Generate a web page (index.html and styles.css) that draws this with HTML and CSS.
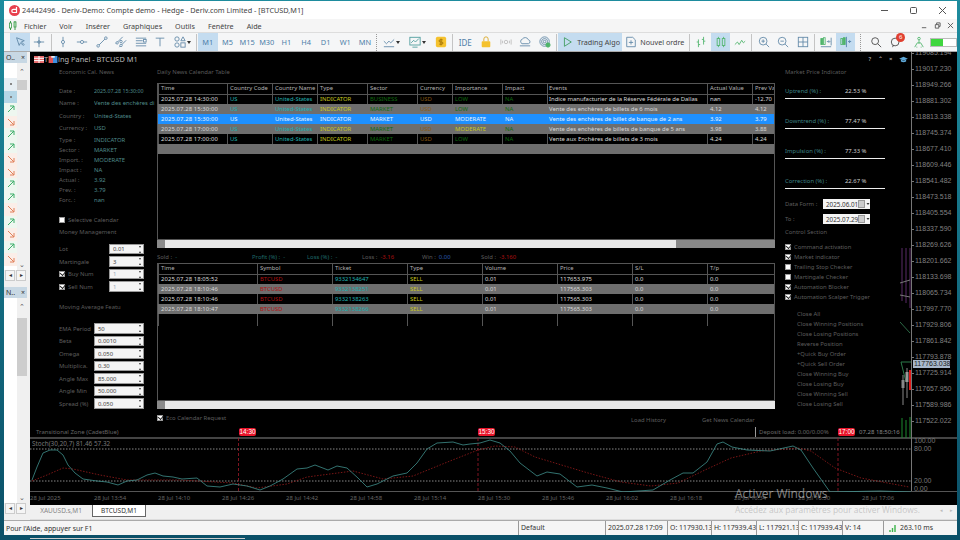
FILE: index.html
```
<!DOCTYPE html>
<html lang="fr">
<head>
  <meta charset="UTF-8" />
  <title>24442496 - Deriv-Demo</title>
  <link rel="stylesheet" href="styles.css">
</head>
<body>
  <svg class="sprites">
    <symbol id="arrow-up" viewBox="0 0 8 8"><path d="M1 7 7 1M3 1h4v4" fill="none" stroke="#3fae6a"/></symbol>
    <symbol id="arrow-down" viewBox="0 0 8 8"><path d="M1 1l6 6M3 7h4V3" fill="none" stroke="#e0805a"/></symbol>
  </svg>

  <div class="window">
    <div class="titlebar">
      <svg class="logo" viewBox="0 0 11 11"><circle cx="5.5" cy="5.5" r="5.5" fill="#e8404e"/><path d="M7.5 2v5.5H4.4a1.6 1.6 0 0 1 0-3.2h3" fill="none" stroke="#fff" stroke-width="1.2"/></svg>
      <span class="title-text">24442496 - Deriv-Demo: Compte demo - Hedge - Deriv.com Limited - [BTCUSD,M1]</span>
      <div class="win-buttons">
        <svg viewBox="0 0 9 9"><path d="M1 4.5h7" stroke="#555"/></svg>
        <svg viewBox="0 0 9 9"><rect x="1.5" y="1.5" width="6" height="6" rx="1" fill="none" stroke="#555"/></svg>
        <svg viewBox="0 0 9 9"><path d="M1 1l7 7M8 1 1 8" stroke="#555"/></svg>
      </div>
    </div>

    <div class="menubar">
      <svg class="menu-icon" viewBox="0 0 9 9"><path d="M1.5 0v9M6 0v9" stroke="#3c9a4a"/><rect x=".5" y="2" width="2" height="5" fill="#fff" stroke="#3c9a4a" stroke-width=".8"/><rect x="5" y="1" width="2" height="5" fill="#bfe8c4" stroke="#3c9a4a" stroke-width=".8"/></svg>
      <nav class="menu">
        <span>Fichier</span><span>Voir</span><span>Insérer</span><span>Graphiques</span><span>Outils</span><span>Fenêtre</span><span>Aide</span>
      </nav>
      <div class="mdi-buttons">
        <svg viewBox="0 0 8 8"><path d="M1 6.5h5" stroke="#555"/></svg>
        <svg viewBox="0 0 8 8"><path d="M1.5 3h4v4h-4zM3 3V1h4v4H5.5" fill="none" stroke="#555"/></svg>
        <svg viewBox="0 0 8 8"><path d="M1 1l6 6M7 1 1 7" stroke="#555"/></svg>
      </div>
    </div>

    <div class="toolbar">
      <button class="tool active"><svg class="ico" viewBox="0 0 14 14"><path d="M3 2l3 9 1.5-3L11 11l1-1-3.5-3L12 5.500z"/></svg></button>
      <button class="tool"><svg class="ico" viewBox="0 0 14 14"><path d="M7 1v12M1 7h12"/><circle cx="7" cy="7" r="1.500"/></svg></button>
      <i class="sep"></i>
      <button class="tool"><svg class="ico" viewBox="0 0 14 14"><path d="M7 1v12"/><circle cx="7" cy="7" r="1.800" fill="#fff"/></svg></button>
      <button class="tool"><svg class="ico" viewBox="0 0 14 14"><path d="M1 7h12"/><circle cx="7" cy="7" r="1.800" fill="#fff"/></svg></button>
      <button class="tool"><svg class="ico" viewBox="0 0 14 14"><path d="M3 11 11 3"/><circle cx="2.500" cy="11.500" r="1.500" fill="#fff"/><circle cx="11.500" cy="2.500" r="1.500" fill="#fff"/></svg></button>
      <button class="tool"><svg class="ico" viewBox="0 0 14 14"><path d="M1 9 9 1M5 13l8-8"/><circle cx="2.500" cy="8" r="1.400" fill="#fff"/><circle cx="7" cy="6.500" r="1.400" fill="#fff"/><circle cx="7" cy="11" r="1.400" fill="#fff"/></svg></button>
      <button class="tool"><svg class="ico" viewBox="0 0 14 14"><path d="M1 2.500h12M1 5.500h8M1 8.500h12M1 11.500h12"/><rect x="10" y="4" width="3" height="3" fill="#fff"/></svg></button>
      <button class="tool"><svg class="ico" viewBox="0 0 14 14"><path d="M2 2.500h10M7 2.500V12"/></svg></button>
      <button class="tool wide"><svg class="ico" viewBox="0 0 14 14"><circle cx="3.500" cy="3.500" r="2.500"/><path d="M10.500 1 13 5.500H8z"/><circle cx="3.500" cy="10.500" r="2.500"/><rect x="8" y="8" width="5" height="5"/></svg><b class="caret"></b></button>
      <i class="sep"></i>
      <div class="timeframes">
        <span class="active">M1</span><span>M5</span><span>M15</span><span>M30</span><span>H1</span><span>H4</span><span>D1</span><span>W1</span><span>MN</span>
      </div>
      <i class="sep dotted"></i>
      <button class="tool wider"><svg class="ico" viewBox="0 0 14 14"><path d="M1 6l3 3 3-3 2 2 4-4M1 12.500h12"/></svg><b class="caret"></b></button>
      <button class="tool wider"><svg class="ico teal" viewBox="0 0 14 14"><rect x="1" y="1.500" width="12" height="9"/><path d="M2.500 8l3-3 2 2 4-4M4 13h6"/></svg><b class="caret"></b></button>
      <button class="tool"><svg viewBox="0 0 14 14"><rect x="1" y="1" width="12" height="12" rx="2" fill="#f5c22e"/><path d="M9 4.500H6a1.200 1.200 0 0 0 0 2.500h2a1.200 1.200 0 0 1 0 2.500H5M7 3v8" fill="none" stroke="#9a6d00"/></svg></button>
      <i class="sep"></i>
      <button class="tool text">IDE</button>
      <button class="tool"><svg viewBox="0 0 14 14"><rect x="2" y="6" width="10" height="7" rx="1" fill="#f5c22e"/><path d="M4.500 6V3.500a2.500 2.500 0 0 1 5 0V6" fill="none" stroke="#d9a520"/></svg></button>
      <button class="tool"><svg class="ico faint" viewBox="0 0 14 14"><path d="M1 4v6M13 4v6M3 5.500v3M11 5.500v3"/><circle cx="7" cy="7" r="2"/></svg></button>
      <button class="tool"><svg class="ico" viewBox="0 0 14 14"><path d="M3.500 9a3 3 0 0 1 .5-5.500 4 4 0 0 1 7 1A2.300 2.300 0 0 1 11 9zM1 11.500h12"/></svg></button>
      <button class="tool"><svg class="ico" viewBox="0 0 14 14"><circle cx="6.500" cy="6.500" r="5.500"/><circle cx="6.500" cy="6.500" r="3.500"/><circle cx="6.500" cy="6.500" r="1.500"/><circle cx="10.500" cy="10.500" r="2.500" fill="#4eb46a" stroke="#4eb46a"/></svg></button>
      <i class="sep"></i>
      <button class="tool label algo active"><svg class="ico" viewBox="0 0 14 14"><path d="M4 2l8 5-8 5z" stroke="#3d9a5c"/></svg>Trading Algo</button>
      <button class="tool label order"><svg class="ico" viewBox="0 0 14 14"><path d="M2 1.500h7l3 3v8H2zM7 5v5M4.500 7.500h5"/></svg>Nouvel ordre</button>
      <i class="sep"></i>
      <button class="tool"><svg class="ico green" viewBox="0 0 14 14"><path d="M4 4v9M2 7h2M4 10h2M10 1v9M8 4h2M10 6h2"/></svg></button>
      <button class="tool active"><svg class="ico green" viewBox="0 0 14 14"><rect x="2.500" y="3" width="3" height="8"/><rect x="8.500" y="3" width="3" height="8"/><path d="M4 1v2M4 11v2M10 1v2M10 11v2"/></svg></button>
      <button class="tool"><svg class="ico green" viewBox="0 0 14 14"><path d="M1 10l3-3 2 3 3-5 2 3 2-2"/></svg></button>
      <i class="sep"></i>
      <button class="tool"><svg class="ico" viewBox="0 0 14 14"><circle cx="6" cy="6" r="4.500"/><path d="M9.500 9.500 13 13M4 6h4M6 4v4"/></svg></button>
      <button class="tool"><svg class="ico" viewBox="0 0 14 14"><circle cx="6" cy="6" r="4.500"/><path d="M9.500 9.500 13 13M4 6h4"/></svg></button>
      <button class="tool"><svg class="ico" viewBox="0 0 14 14"><rect x="1.500" y="1.500" width="11" height="11"/><path d="M7 1.500v11M1.500 7h11"/></svg></button>
      <i class="sep"></i>
      <button class="tool"><svg class="ico green" viewBox="0 0 14 14"><rect x="1" y="3" width="2" height="7" fill="#4eb46a"/><rect x="4" y="2" width="2" height="8"/><path d="M8 6.500h3M10 5l1.500 1.500L10 8M13 2v9M1 12.500h12" stroke="#5f86a6"/></svg></button>
      <button class="tool active"><svg class="ico green" viewBox="0 0 14 14"><rect x="1" y="3" width="2" height="7"/><rect x="4" y="2" width="2" height="8" fill="#4eb46a"/><path d="M7.500 1v12M13 6.500h-3M11.500 5 10 6.500 11.500 8" stroke="#4d7ea8"/></svg></button>
      <i class="sep dotted spaced"></i>
      <button class="tool"><svg class="ico dark" viewBox="0 0 14 14"><circle cx="6" cy="6" r="4"/><path d="M9 9l4 4"/></svg></button>
      <button class="tool chat"><svg class="ico dark" viewBox="0 0 14 14"><circle cx="6" cy="7" r="4.500"/><path d="M4 10.500 3 13"/></svg><em class="badge">6</em></button>
      <button class="tool signal"><svg class="ico green" viewBox="0 0 14 14"><circle cx="7" cy="3" r="1.500"/><path d="M7 4.500V9M2 13l3-5h4l3 5M4 13h1M9 13h1"/></svg></button>
      <div class="meter"><span></span></div>
    </div>

    <div class="workspace">
      <aside class="sidebar">
        <section class="dock dock-top">
          <header class="dock-head"><span>O..</span><span>×</span></header>
          <div class="dock-body">
            <ul class="quotes">
              <li class="dot"><b></b></li>
              <li class="dot picked"><b></b></li>
              <li><svg><use href="#arrow-up"/></svg></li>
              <li class="down"><svg><use href="#arrow-down"/></svg></li>
              <li><svg><use href="#arrow-up"/></svg></li>
              <li><svg><use href="#arrow-up"/></svg></li>
              <li class="down"><svg><use href="#arrow-down"/></svg></li>
              <li class="down"><svg><use href="#arrow-down"/></svg></li>
              <li><svg><use href="#arrow-up"/></svg></li>
              <li><svg><use href="#arrow-up"/></svg></li>
              <li class="down"><svg><use href="#arrow-down"/></svg></li>
              <li><svg><use href="#arrow-up"/></svg></li>
              <li class="down"><svg><use href="#arrow-down"/></svg></li>
              <li><svg><use href="#arrow-up"/></svg></li>
              <li class="down"><svg><use href="#arrow-down"/></svg></li>
            </ul>
            <div class="vscroll vscroll-top"><span class="chev">⌃</span><span class="thumb"></span><span class="chev bottom">⌄</span></div>
          </div>
          <div class="hscroll"><span>◂</span><span>▸</span></div>
        </section>
        <section class="dock dock-bottom">
          <header class="dock-head"><span>N..</span><span>×</span></header>
          <div class="dock-body">
            <div class="blank-list"></div>
            <div class="vscroll vscroll-bottom"><span class="chev">⌃</span><span class="thumb"></span><span class="chev bottom">⌄</span></div>
          </div>
          <div class="hscroll"><span>◂</span><span>▸</span></div>
        </section>
      </aside>

      <div class="charts">
        <div class="main-pane">
          <div class="plot">
            <svg class="candles" viewBox="0 0 12 190">
              <path d="M2 0v53M6 0v55M10 0v60" stroke="#5a2a68"/>
              <path d="M0 35l10-3M0 47l10 2" stroke="#777"/>
              <path d="M0 74l10 11" stroke="#2c6a46"/>
              <path d="M1 114h11M1 114l5 20" stroke="#2c7a4a"/>
              <path d="M3 127v30M7 120v30" stroke="#888"/>
              <rect x="1.500" y="132" width="3" height="8" fill="#888"/>
              <rect x="5.500" y="124" width="3" height="10" fill="#999"/>
              <rect x="9" y="122" width="2.500" height="20" fill="#e01818"/>
              <path d="M2 170v20M6 172v18M10 169v21" stroke="#1c8a2e"/>
            </svg>
            <div class="panel">
              <header class="panel-title">
                <svg class="panel-icon" viewBox="0 0 10 7"><rect width="10" height="7" fill="#e86a6a"/><path d="M0 2.300h10M0 4.600h10M5 0v7" stroke="#fff"/></svg>
                <span>T</span>
                <svg class="panel-icon" viewBox="0 0 10 8"><rect width="5" height="8" y="0" fill="#e25555"/><rect x="5" width="5" height="8" fill="#3d8fe0"/><rect x="3" y="0" width="4" height="2" fill="#eee"/></svg>
                <span>ing Panel - BTCUSD M1</span>
                <div class="panel-actions">
                  <span>?</span><span>⌃</span><span>×</span>
                  <svg viewBox="0 0 10 8"><path d="M0 3 5 .8 10 3 5 5.200z" fill="#5ea8d8"/><path d="M2 4v2.200c2 1.200 4 1.200 6 0V4L5 5.300z" fill="#5ea8d8"/></svg>
                </div>
              </header>

              <div class="panel-body">
                <div class="col-news">
                  <h4 class="section">Economic Cal. News</h4>
                  <div class="info info-tall first"><label>Date :</label><span class="date-value">2025.07.28 15:30:00</span></div>
                  <div class="info info-tall"><label>Name :</label><span>Vente des enchères di</span></div>
                  <div class="info info-tall"><label>Country :</label><span>United-States</span></div>
                  <div class="info info-tall"><label>Currency :</label><span>USD</span></div>
                  <div class="info"><label>Type :</label><span>INDICATOR</span></div>
                  <div class="info"><label>Sector :</label><span>MARKET</span></div>
                  <div class="info"><label>Import. :</label><span>MODERATE</span></div>
                  <div class="info"><label>Impact :</label><span>NA</span></div>
                  <div class="info"><label>Actual :</label><span>3.92</span></div>
                  <div class="info"><label>Prev. :</label><span>3.79</span></div>
                  <div class="info"><label>Forc. :</label><span>nan</span></div>
                  <div class="check-row selective"><i class="check"></i>Selective Calendar</div>
                  <h4 class="section money">Money Management</h4>
                  <div class="field first-money"><label>Lot</label><div class="spin short"><span>0.01</span><b></b></div></div>
                  <div class="field"><label>Martingale</label><div class="spin short"><span>3</span><b></b></div></div>
                  <div class="field"><label><i class="check on"></i>Buy Num</label><div class="spin short off"><span>1</span><b></b></div></div>
                  <div class="field"><label><i class="check on"></i>Sell Num</label><div class="spin short off"><span>1</span><b></b></div></div>
                  <h4 class="section moving">Moving Average Featu</h4>
                  <div class="field first-ema"><label>EMA Period</label><div class="spin"><span>50</span><b></b></div></div>
                  <div class="field"><label>Beta</label><div class="spin"><span>0.0010</span><b></b></div></div>
                  <div class="field"><label>Omega</label><div class="spin"><span>0.050</span><b></b></div></div>
                  <div class="field"><label>Multiplica.</label><div class="spin"><span>0.30</span><b></b></div></div>
                  <div class="field"><label>Angle Max</label><div class="spin"><span>85.000</span><b></b></div></div>
                  <div class="field"><label>Angle Min</label><div class="spin"><span>50.000</span><b></b></div></div>
                  <div class="field"><label>Spread (%)</label><div class="spin"><span>0.050</span><b></b></div></div>
                </div>

                <div class="col-tables">
                  <h4 class="section">Daily News Calendar Table</h4>
                  <div class="grid-box news-box">
                    <table class="grid news-grid">
                      <colgroup><col><col><col><col><col><col><col><col><col><col><col></colgroup>
                      <tr><th>Time</th><th>Country Code</th><th>Country Name</th><th>Type</th><th>Sector</th><th>Currency</th><th>Importance</th><th>Impact</th><th class="ev">Events</th><th>Actual Value</th><th>Prev Value</th></tr>
                      <tr><td>2025.07.28 14:30:00</td><td class="teal">US</td><td class="teal">United-States</td><td class="yellow">INDICATOR</td><td class="green">BUSINESS</td><td class="orange">USD</td><td class="green">LOW</td><td class="green">NA</td><td class="ev">Indice manufacturier de la Réserve Fédérale de Dallas</td><td>nan</td><td>-12.70</td></tr>
                      <tr class="alt"><td>2025.07.28 15:30:00</td><td class="teal">US</td><td class="teal">United-States</td><td class="yellow">INDICATOR</td><td class="green">MARKET</td><td class="orange">USD</td><td class="green">LOW</td><td class="green">NA</td><td class="ev">Vente des enchères de billets de 6 mois</td><td>4.12</td><td>4.12</td></tr>
                      <tr class="selected"><td>2025.07.28 15:30:00</td><td>US</td><td>United-States</td><td>INDICATOR</td><td>MARKET</td><td>USD</td><td>MODERATE</td><td>NA</td><td class="ev">Vente des enchères de billet de banque de 2 ans</td><td>3.92</td><td>3.79</td></tr>
                      <tr class="alt"><td>2025.07.28 17:00:00</td><td class="teal">US</td><td class="teal">United-States</td><td class="yellow">INDICATOR</td><td class="green">MARKET</td><td class="orange">USD</td><td class="yellow">MODERATE</td><td class="green">NA</td><td class="ev">Vente des enchères de billets de banque de 5 ans</td><td>3.98</td><td>3.88</td></tr>
                      <tr><td>2025.07.28 17:00:00</td><td class="teal">US</td><td class="teal">United-States</td><td class="yellow">INDICATOR</td><td class="green">MARKET</td><td class="orange">USD</td><td class="green">LOW</td><td class="green">NA</td><td class="ev">Vente aux Enchères de billets de 3 mois</td><td>4.24</td><td>4.24</td></tr>
                      <tr class="alt"><td colspan="11"></td></tr>
                    </table>
                  </div>
                  <div class="hbar"><i></i><span></span></div>

                  <div class="summary">
                    <span class="sum-sold">Sold :&nbsp; <em class="teal">-</em></span>
                    <span class="sum-pct dim-teal">Profit (%) :&nbsp; -</span>
                    <span class="sum-pct dim-teal">Loss (%) :&nbsp; -</span>
                    <span class="sum-loss">Loss :&nbsp; <em class="red">-3.16</em></span>
                    <span class="sum-win">Win :&nbsp; <em class="blue">0.00</em></span>
                    <span>Sold :&nbsp; <em class="red">-3.160</em></span>
                  </div>

                  <div class="grid-box trades-box">
                    <table class="grid trades-grid">
                      <colgroup><col><col><col><col><col><col><col><col></colgroup>
                      <tr><th>Time</th><th>Symbol</th><th>Ticket</th><th>Type</th><th>Volume</th><th>Price</th><th>S/L</th><th>T/p</th></tr>
                      <tr><td>2025.07.28 18:05:52</td><td class="red">BTCUSD</td><td class="teal">9332134647</td><td class="yellow">SELL</td><td>0.01</td><td>117653.975</td><td>0.0</td><td>0.0</td></tr>
                      <tr class="alt"><td>2025.07.28 18:10:46</td><td class="red">BTCUSD</td><td class="teal">9332138251</td><td class="yellow">SELL</td><td>0.01</td><td>117565.303</td><td>0.0</td><td>0.0</td></tr>
                      <tr><td>2025.07.28 18:10:46</td><td class="red">BTCUSD</td><td class="teal">9332138263</td><td class="yellow">SELL</td><td>0.01</td><td>117565.303</td><td>0.0</td><td>0.0</td></tr>
                      <tr class="alt"><td>2025.07.28 18:10:47</td><td class="red">BTCUSD</td><td class="teal">9332138266</td><td class="yellow">SELL</td><td>0.01</td><td>117565.303</td><td>0.0</td><td>0.0</td></tr>
                      <tr class="empty"><td></td><td></td><td></td><td></td><td></td><td></td><td></td><td></td></tr>
                    </table>
                  </div>
                  <div class="hbar short-bar"><i></i><span></span></div>

                  <div class="panel-footer">
                    <div class="check-row eco"><i class="check on"></i>Eco Calendar Request</div>
                    <span class="load-link">Load History</span>
                    <span class="news-link">Get News Calendar</span>
                  </div>
                </div>

                <div class="col-control">
                  <h4 class="section">Market Price Indicator</h4>
                  <div class="gauge first"><label>Uptrend (%) :</label><span>22.53 %</span></div>
                  <div class="gauge"><label>Downtrend (%) :</label><span>77.47 %</span></div>
                  <div class="gauge"><label>Impulsion (%) :</label><span>77.33 %</span></div>
                  <div class="gauge"><label>Correction (%) :</label><span>22.67 %</span></div>
                  <div class="date-row first"><label>Data Form :</label><div class="date-box"><span>2025.06.01</span><svg viewBox="0 0 12 8"><rect x=".5" y=".5" width="6" height="7" fill="#ccc" stroke="#999"/><path d="M8.500 3h3L10 5z" fill="#333"/></svg></div></div>
                  <div class="date-row"><label>To :</label><div class="date-box"><span>2025.07.29</span><svg viewBox="0 0 12 8"><rect x=".5" y=".5" width="6" height="7" fill="#ccc" stroke="#999"/><path d="M8.500 3h3L10 5z" fill="#333"/></svg></div></div>
                  <h4 class="section control">Control Section</h4>
                  <div class="checks">
                    <div class="check-row"><i class="check on"></i>Command activation</div>
                    <div class="check-row"><i class="check on"></i>Market indicator</div>
                    <div class="check-row"><i class="check"></i>Trailing Stop Checker</div>
                    <div class="check-row"><i class="check"></i>Martingale Checker</div>
                    <div class="check-row"><i class="check on"></i>Automation Blocker</div>
                    <div class="check-row"><i class="check on"></i>Automation Scalper Trigger</div>
                  </div>
                  <div class="actions">
                    <span>Close All</span>
                    <span>Close Winning Positions</span>
                    <span>Close Losing Positions</span>
                    <span>Reverse Position</span>
                    <span>+Quick Buy Order</span>
                    <span>+Quick Sell Order</span>
                    <span>Close Winning Buy</span>
                    <span>Close Losing Buy</span>
                    <span>Close Winning Sell</span>
                    <span>Close Losing Sell</span>
                  </div>
                </div>
              </div>
            </div>
            <div class="plot-notes">
              <span class="note-zone">Transitional Zone (CadetBlue)</span>
              <span class="note-load">Deposit load: 0.00/0.00%</span>
              <span class="note-time">07.28 18:50:16</span>
            </div>
            <span class="event-tag tag-1430">14:30</span>
            <span class="event-tag tag-1530">15:30</span>
            <span class="event-tag tag-1700">17:00</span>
          </div>
          <div class="price-axis">
            <span>119085.194</span><span>119017.230</span><span>118949.266</span><span>118881.302</span><span>118813.338</span><span>118745.374</span><span>118677.410</span><span>118609.446</span><span>118541.482</span><span>118473.518</span><span>118405.554</span><span>118337.590</span><span>118269.626</span><span>118201.662</span><span>118133.698</span><span>118065.734</span><span>117997.770</span><span>117929.806</span><span>117861.842</span><span>117793.878</span><span>117725.914</span><span>117657.950</span><span>117589.986</span><span>117522.022</span>
            <b class="price-tag">117763.038</b>
          </div>
        </div>

        <div class="stoch-pane">
          <div class="stoch-plot">
            <span class="stoch-label">Stoch(30,20,7) 81.46 57.32</span>
            <svg class="stoch-svg" viewBox="0 0 881 54">
              <path d="M0 11H881M0 43H881" stroke="#aaa" stroke-width=".8" stroke-dasharray="1.500 1.500"/>
              <path d="M208.500 0V54M448 0V54M808 0V54" stroke="#a01828" stroke-width=".8" stroke-dasharray="3 2"/>
              <polyline fill="none" stroke="#981c1c" stroke-width=".8" stroke-dasharray="1.500 1.500" points="2,43 17,37 33,30 43,31 70,37 97,42 117,42 150,42 203,45 227,50 257,46 277,39 323,33 353,41 383,38 420,23 448,12 465,8 485,9 505,19 558,35 591,44 621,48 648,45 675,32 701,20 731,13 768,10 781,13 805,30 831,40 879,49"/>
              <polyline fill="none" stroke="#3f8f8c" stroke-width=".8" points="2,42 7,29 13,15 20,12 27,12 33,17 38,27 45,35 53,41 67,43 77,44 88,47 97,43 107,42 117,37 125,35 133,38 143,39 152,41 167,40 177,48 190,49 203,46 217,48 230,52 240,48 253,41 267,31 277,30 285,27 298,32 307,28 317,30 328,40 337,49 347,46 363,38 377,35 387,25 397,11 407,5 423,4 433,7 440,6 450,5 460,2 470,5 480,13 490,25 507,38 517,34 530,36 547,49 562,47 577,50 593,54 623,52 640,42 653,35 663,35 677,24 687,6 693,4 702,9 717,12 740,13 763,8 771,12 783,30 800,54 850,53 881,54"/>
            </svg>
          </div>
          <div class="stoch-axis"><span>100.00</span><span>80.00</span><span class="gap">20.00</span><span>0.00</span></div>
        </div>

        <div class="time-axis">
          <span>28 Jul 2025</span><span>28 Jul 13:54</span><span>28 Jul 14:10</span><span>28 Jul 14:26</span><span>28 Jul 14:42</span><span>28 Jul 14:58</span><span>28 Jul 15:14</span><span>28 Jul 15:30</span><span>28 Jul 15:46</span><span>28 Jul 16:02</span><span>28 Jul 16:18</span><span>28 Jul 16:34</span><span>28 Jul 16:50</span><span>28 Jul 17:06</span>
        </div>
        <div class="chart-tabs">
          <span class="tab">XAUUSD.s,M1</span><span class="tab current">BTCUSD,M1</span>
          <span class="tab-arrows"><i>◂</i><i>▸</i></span>
        </div>
      </div>
    </div>

    <footer class="statusbar">
      <span class="status-help">Pour l'Aide, appuyer sur F1</span>
      <span class="cell cell-profile">Default</span>
      <span class="cell cell-time">2025.07.28 17:09</span>
      <span class="cell cell-o">O: 117930.13</span>
      <span class="cell cell-h">H: 117939.43</span>
      <span class="cell cell-l">L: 117921.13</span>
      <span class="cell cell-o">C: 117939.43</span>
      <span class="cell cell-v">V: 14</span>
      <span class="cell ping"><svg viewBox="0 0 8 7"><path d="M1 7V5M3.500 7V3M6 7V0" stroke="#3cb44a" stroke-width="1.400"/></svg>263.10 ms</span>
    </footer>
  </div>
  <div class="behind-bar"></div>

  <div class="watermark">
    <p class="wm-big">Activer Windows</p>
    <p class="wm-small">Accédez aux paramètres pour activer Windows.</p>
  </div>
</body>
</html>
```

FILE: styles.css
```
* {
  box-sizing: border-box;
}

body {
  margin: 0;
  width: 960px;
  height: 540px;
  overflow: hidden;
  position: relative;
  font-family: "Noto Sans", "Liberation Sans", sans-serif;
  background: linear-gradient(#1e8c9e, #0b5068);
}

.sprites {
  position: absolute;
  width: 0;
  height: 0;
}

.window {
  margin: 1px 3px 0 4px;
  height: 534px;
  display: flex;
  flex-direction: column;
  background: #f0f0f0;
  color: #333;
}

/* title and menu */
.titlebar {
  height: 18px;
  flex: none;
  display: flex;
  align-items: center;
  background: #fff;
  padding-left: 5px;
  font-size: 7.300px;
  color: #444;
}

.logo {
  width: 11px;
  height: 11px;
  margin-right: 2px;
}

.win-buttons {
  margin-left: auto;
  display: flex;
  gap: 20px;
  margin-right: 10px;
}

.win-buttons svg {
  width: 9px;
  height: 9px;
}

.menubar {
  height: 13px;
  flex: none;
  display: flex;
  align-items: center;
  padding-left: 5px;
  background: #f5f5f5;
  font-size: 7.200px;
  color: #444;
}

.menu-icon {
  width: 9px;
  height: 9px;
  margin-right: 6px;
}

.menu {
  display: flex;
  gap: 13px;
}

.mdi-buttons {
  margin-left: auto;
  display: flex;
  gap: 6px;
  margin-right: 3px;
}

.mdi-buttons svg {
  width: 7px;
  height: 7px;
}

/* toolbar */
.toolbar {
  height: 20px;
  flex: none;
  display: flex;
  align-items: center;
  padding-left: 6px;
  background: #f5f6f7;
  border-top: 1px solid #ddd;
  border-bottom: 1px solid #aaa;
  font-size: 7.400px;
  color: #555;
}

.tool {
  width: 19.500px;
  height: 18px;
  flex: none;
  padding: 2px 0;
  border: 0;
  background: none;
  font: inherit;
  color: inherit;
  display: flex;
  align-items: center;
  justify-content: center;
  position: relative;
}

.tool svg {
  width: 12px;
  height: 12px;
}

.tool.active,
.timeframes .active {
  background: #c4dcf0;
}

.tool.wide {
  width: 24px;
  gap: 1px;
}

.tool.wider {
  width: 26px;
  gap: 1px;
}

.tool.text {
  width: 22px;
  color: #4d7ea8;
  font-size: 8px;
}

.tool.label {
  justify-content: flex-start;
  padding: 0 0 0 3px;
  font-size: 7.200px;
  color: #444;
}

.tool.algo {
  width: 64px;
  gap: 4px;
}

.tool.order {
  width: 65px;
  gap: 3px;
}

.tool.signal {
  margin-left: 4px;
}

.caret {
  width: 0;
  height: 0;
  border: 2px solid transparent;
  border-top: 3px solid #333;
  border-bottom: 0;
}

.sep {
  width: 1px;
  height: 17px;
  margin: 0 1.500px;
  flex: none;
  background: #c4c4c4;
}

.sep.dotted {
  background: none;
  border-left: 1px dotted #999;
}

.sep.spaced {
  margin: 0 5px;
}

.ico {
  fill: none;
  stroke: #5f86a6;
  stroke-width: 1;
}

.ico.green {
  stroke: #4eb46a;
}

.ico.teal {
  stroke: #4a9a9a;
}

.ico.dark {
  stroke: #444;
}

.ico.faint {
  stroke: #bbb;
}

.timeframes {
  display: flex;
  color: #4d7ea8;
}

.timeframes span {
  width: 19.650px;
  height: 18px;
  line-height: 18px;
  text-align: center;
}

.badge {
  position: absolute;
  top: 0;
  right: 0;
  width: 9px;
  height: 9px;
  border-radius: 50%;
  background: #e04030;
  color: #fff;
  font-size: 6px;
  font-style: normal;
  line-height: 9px;
  text-align: center;
}

.meter {
  width: 28px;
  height: 9px;
  margin-left: 1px;
  border: 1px solid #bbb;
  background: #fff;
}

.meter span {
  display: block;
  width: 12px;
  height: 100%;
  background: #3fd63f;
}

/* left docks */
.workspace {
  flex: 1;
  min-height: 0;
  display: flex;
}

.sidebar {
  width: 26px;
  flex: none;
  display: flex;
  flex-direction: column;
  background: #f0f0f0;
  padding-right: 3px;
}

.dock {
  display: flex;
  flex-direction: column;
}

.dock-top {
  height: 235px;
}

.dock-bottom {
  flex: 1;
}

.dock-head {
  height: 11px;
  flex: none;
  display: flex;
  justify-content: space-between;
  padding: 0 2px;
  background: #c8d8e4;
  font-size: 7px;
  line-height: 11px;
  color: #333;
}

.dock-body {
  flex: 1;
  min-height: 0;
  display: flex;
}

.quotes {
  width: 13px;
  margin: 0;
  padding: 15px 0 0;
  list-style: none;
  background: #fff;
}

.quotes li {
  height: 12.500px;
  display: flex;
  align-items: center;
  justify-content: center;
  background: #eef7f0;
}

.quotes li.down {
  background: #fbeee8;
}

.quotes li.dot b {
  width: 2px;
  height: 2px;
  background: #888;
}

.quotes li.dot {
  background: #e6eef3;
}

.quotes li.picked {
  background: #b4d6e6;
}

.quotes svg {
  width: 8px;
  height: 8px;
}

.blank-list {
  width: 13px;
  background: #fff;
}

.vscroll {
  flex: 1;
  display: flex;
  flex-direction: column;
  background: #f0f0f0;
  font-size: 7px;
  color: #555;
  text-align: center;
}

.chev {
  height: 16px;
  line-height: 18px;
}

.chev.bottom {
  height: 8px;
  margin-top: auto;
  line-height: 6px;
}

.thumb {
  background: #cdcdcd;
}

.vscroll-top .thumb {
  height: 10px;
  margin-top: 1px;
}

.vscroll-bottom .thumb {
  height: 58px;
  margin-top: 4px;
}

.hscroll {
  height: 11px;
  flex: none;
  display: flex;
  gap: 1px;
  margin-bottom: 6px;
  padding: 0 1px;
  font-size: 6px;
  color: #333;
}

.hscroll span {
  flex: 1;
  text-align: center;
  background: #f5f5f5;
  border: 1px solid #ccc;
  line-height: 9px;
}

/* chart area */
.charts {
  flex: 1;
  min-width: 0;
  display: flex;
  flex-direction: column;
  background: #000;
}

.main-pane {
  height: 385px;
  flex: none;
  display: flex;
  font-family: "Liberation Sans", sans-serif;
}

.plot {
  width: 881px;
  flex: none;
  position: relative;
  background: #000;
}

.candles {
  position: absolute;
  left: 870px;
  top: 196px;
  width: 12px;
  height: 190px;
}

.price-axis {
  flex: 1;
  position: relative;
  overflow: hidden;
  border-left: 1px solid #777;
  display: flex;
  flex-direction: column;
  font-size: 7px;
  color: #808080;
}

.price-axis span {
  height: 16px;
  flex: none;
  line-height: 16px;
  white-space: nowrap;
}

.price-axis span:first-child {
  margin-top: -7px;
}

.price-axis span::before {
  content: "";
  display: inline-block;
  width: 2px;
  height: 1px;
  margin-right: 1px;
  vertical-align: middle;
  background: #777;
}

.price-tag {
  position: absolute;
  left: 1px;
  top: 308px;
  height: 8px;
  width: 37px;
  background: #a8b8cc;
  color: #222;
  font-weight: 400;
  line-height: 8px;
  font-size: 7px;
  padding-left: 1px;
}

.panel {
  display: flex;
  flex-direction: column;
  height: 100%;
  font-family: "Noto Sans", "Liberation Sans", sans-serif;
  font-size: 5.900px;
  color: #5e5e5e;
}

.panel-title {
  height: 14px;
  flex: none;
  display: flex;
  align-items: center;
  padding-left: 4px;
  font-size: 7.400px;
  color: #bbb;
}

.panel-icon {
  width: 10px;
  height: 7px;
}

.panel-actions {
  margin-left: auto;
  display: flex;
  align-items: center;
  gap: 6.500px;
  margin-right: 3px;
  color: #ccc;
  font-size: 6px;
}

.panel-actions svg {
  width: 9px;
  height: 7px;
}

.panel-body {
  flex: 1;
  display: flex;
  padding-left: 29px;
}

.section {
  margin: 0;
  font-size: 5.900px;
  font-weight: 400;
  height: 12px;
  line-height: 12px;
  color: #5a5a5a;
}

/* left form column */
.col-news {
  width: 98px;
  flex: none;
}

.info {
  display: flex;
  height: 10px;
  line-height: 10px;
}

.info.info-tall {
  height: 12.500px;
  line-height: 12.500px;
}

.info.first {
  margin-top: 6.750px;
}

.info label {
  width: 35px;
  flex: none;
}

.info span {
  width: 63px;
  white-space: nowrap;
  overflow: hidden;
  color: #4f8a8a;
}

.info .date-value {
  font-size: 5.300px;
}

.check-row {
  display: flex;
  align-items: center;
  gap: 3px;
  height: 10px;
  white-space: nowrap;
}

.check {
  width: 6px;
  height: 6px;
  flex: none;
  background: #fff;
  border: 1px solid #999;
  position: relative;
  display: block;
}

.check.on::after {
  content: "";
  position: absolute;
  left: 0;
  top: -1px;
  width: 4px;
  height: 2.500px;
  border-left: 1px solid #222;
  border-bottom: 1px solid #222;
  transform: rotate(-50deg);
}

.selective {
  margin-top: 10px;
}

.money {
  margin-top: 2px;
  height: 10px;
  line-height: 10px;
}

.field {
  display: flex;
  align-items: center;
  justify-content: space-between;
  height: 12.500px;
  width: 85px;
}

.field label {
  display: flex;
  align-items: center;
  gap: 3px;
}

.first-money {
  margin-top: 6px;
}

.moving {
  margin-top: 9px;
  height: 10px;
  line-height: 10px;
}

.first-ema {
  margin-top: 10.500px;
}

.spin {
  width: 50px;
  height: 10.500px;
  display: flex;
  align-items: center;
  justify-content: space-between;
  padding: 0 2px 0 3px;
  background: #f4f4f4;
  border: 1px solid #999;
  color: #444;
}

.spin.short {
  width: 35px;
}

.spin.off {
  color: #9ab;
}

.spin b {
  width: 0;
  height: 7px;
  border-left: 1.500px solid transparent;
  border-right: 1.500px solid transparent;
  border-top: 2.500px solid #333;
  border-bottom: 2.500px solid #333;
}

/* tables */
.col-tables {
  width: 618px;
  flex: none;
}

.grid-box {
  border: 1px solid #555;
  overflow: hidden;
}

.news-box {
  height: 157px;
  margin-top: 5px;
}

.trades-box {
  height: 138px;
}

.grid {
  width: 100%;
  table-layout: fixed;
  border-collapse: collapse;
  font-size: 5.900px;
}

.news-grid col:nth-child(1) { width: 69px; }
.news-grid col:nth-child(2) { width: 45px; }
.news-grid col:nth-child(3) { width: 45px; }
.news-grid col:nth-child(4) { width: 50px; }
.news-grid col:nth-child(5) { width: 50px; }
.news-grid col:nth-child(6) { width: 35px; }
.news-grid col:nth-child(7) { width: 50px; }
.news-grid col:nth-child(8) { width: 45px; }
.news-grid col:nth-child(9) { width: 160px; }
.news-grid col:nth-child(10) { width: 45px; }

.trades-grid col:nth-child(1) { width: 99px; }
.trades-grid col:nth-child(n+2) { width: 75px; }
.trades-grid col:nth-child(8) { width: auto; }

.grid th,
.grid td {
  height: 10px;
  padding: 0 0 0 2px;
  border-left: 1px solid #555;
  font-weight: 400;
  text-align: left;
  white-space: nowrap;
  overflow: hidden;
  line-height: 9px;
  color: #d8d8d8;
}

.grid td:first-child {
  letter-spacing: 0.1px;
}

.grid th {
  color: #b4b4b4;
  border-bottom: 1px solid #555;
}

.grid .ev {
  padding-left: 1px;
}

.grid tr.alt td {
  background: #6e6e6e;
  border-left-color: #6e6e6e;
}

.grid tr.selected td {
  background: #1e90ff;
  border-left-color: #1e90ff;
  color: #e8f4ff;
}

.grid td.teal {
  color: #20b0b0;
}

.grid td.yellow {
  color: #c8c81e;
}

.grid td.green {
  color: #0f6a0f;
}

.grid td.orange {
  color: #8a5a12;
}

.grid td.red {
  color: #b01010;
}

.grid tr.empty td {
  height: 12px;
}

.hbar {
  height: 8px;
  display: flex;
  justify-content: space-between;
  background: #e8e8e8;
}

.hbar i {
  width: 8px;
  background: #8a8a8a;
}

.hbar span {
  display: block;
  width: 99px;
  background: #888;
}

.short-bar span {
  width: 0;
}

.summary {
  height: 15px;
  display: flex;
  align-items: center;
  padding-top: 3px;
  white-space: nowrap;
}

.summary em {
  font-style: normal;
}

.summary .teal,
.dim-teal {
  color: #1f6a6a;
}

.summary .red {
  color: #b01010;
}

.summary .blue {
  color: #2a5ab0;
}

.sum-sold { width: 95px; }
.sum-pct { width: 55px; }
.sum-loss { width: 60px; }
.sum-win { width: 59px; }

.panel-footer {
  display: flex;
  margin-top: 3px;
  align-items: center;
  height: 12px;
}

.eco {
  margin-left: 0;
  width: 474px;
}

.load-link {
  width: 71px;
  padding-top: 4px;
}

.news-link {
  padding-top: 4px;
}

/* right column */
.col-control {
  margin-left: 10px;
  width: 120px;
  flex: none;
}

.gauge {
  width: 100px;
  height: 14px;
  margin-top: 16px;
  display: flex;
  border-bottom: 1px solid #eee;
  line-height: 13px;
}

.gauge.first {
  margin-top: 7px;
}

.gauge label {
  width: 60px;
  color: #3e8080;
}

.gauge span {
  color: #ccc;
}

.date-row {
  display: flex;
  align-items: center;
  height: 10px;
  margin-top: 5px;
}

.date-row.first {
  margin-top: 10px;
}

.date-row label {
  width: 38px;
}

.date-box {
  width: 47px;
  height: 10px;
  display: flex;
  align-items: center;
  justify-content: space-between;
  padding: 0 1px 0 3px;
  background: #f4f4f4;
  color: #333;
  font-size: 6.300px;
  overflow: hidden;
}

.date-box svg {
  width: 12px;
  height: 8px;
  flex: none;
}

.control {
  margin-top: 3px;
  height: 10px;
  line-height: 10px;
}

.checks {
  margin-top: 5px;
}

.actions {
  margin-top: 7px;
  padding-left: 12px;
  display: flex;
  flex-direction: column;
}

.actions span {
  height: 10px;
  line-height: 10px;
}

/* overlays on the price chart */
.plot-notes {
  position: absolute;
  left: 0;
  right: 0;
  bottom: 0;
  height: 10px;
  font-family: "Noto Sans", sans-serif;
  font-size: 6px;
  line-height: 10px;
  color: #666;
}

.note-zone {
  position: absolute;
  left: 6px;
}

.note-load {
  position: absolute;
  left: 725px;
  padding-left: 3px;
  border-left: 1px solid #999;
}

.note-time {
  position: absolute;
  left: 829px;
  color: #888;
}

.event-tag {
  position: absolute;
  bottom: 1px;
  width: 17px;
  height: 8px;
  border-radius: 2px;
  background: #e8152a;
  color: #fff;
  font-size: 6.400px;
  line-height: 8px;
  text-align: center;
}

.tag-1430 { left: 209px; }
.tag-1530 { left: 448px; }
.tag-1700 { left: 808px; }

/* stochastic */
.stoch-pane {
  height: 55px;
  flex: none;
  display: flex;
  border-top: 2px solid #444;
  border-bottom: 1px solid #555;
}

.stoch-plot {
  width: 881px;
  flex: none;
  position: relative;
}

.stoch-svg {
  display: block;
  width: 881px;
  height: 54px;
  margin-top: -1px;
}

.stoch-label {
  position: absolute;
  left: 2px;
  top: 0;
  font-size: 6.400px;
  line-height: 9px;
  color: #777;
}

.stoch-axis {
  flex: 1;
  border-left: 1px solid #777;
  padding-left: 2px;
  display: flex;
  flex-direction: column;
  margin-top: -2px;
  font-family: "Liberation Sans", sans-serif;
  font-size: 7px;
  color: #777;
}

.stoch-axis span {
  height: 8px;
  line-height: 8px;
}

.stoch-axis .gap {
  margin-top: 24px;
}

.time-axis {
  height: 13px;
  flex: none;
  display: flex;
  font-size: 6px;
  line-height: 12px;
  color: #666;
  overflow: hidden;
}

.time-axis span {
  width: 64px;
  flex: none;
  white-space: nowrap;
}

.chart-tabs {
  flex: 1;
  display: flex;
  align-items: flex-start;
  background: #f0f0f0;
  font-size: 6.500px;
  border-bottom: 1px solid #ddd;
}

.tab {
  width: 62px;
  height: 12px;
  line-height: 12px;
  text-align: center;
  color: #888;
}

.tab.current {
  width: 54px;
  background: #fff;
  border: 1px solid #666;
  border-top: 0;
  color: #333;
  line-height: 11px;
}

.tab-arrows {
  margin-left: auto;
  display: flex;
  gap: 7px;
  margin-right: 4px;
  font-size: 5px;
  line-height: 11px;
  color: #bbb;
}

.tab-arrows i {
  font-style: normal;
}

/* status bar */
.statusbar {
  height: 15px;
  flex: none;
  display: flex;
  align-items: center;
  background: #f5f5f5;
  border-top: 1px solid #aaa;
  padding-left: 2px;
  font-size: 6.900px;
  color: #333;
  white-space: nowrap;
}

.status-help { width: 512px; }
.cell-profile { width: 87px; }
.cell-time { width: 62px; }
.cell-o { width: 44px; }
.cell-h { width: 45px; }
.cell-l { width: 42px; }
.cell-v { width: 41px; }

.cell {
  height: 100%;
  line-height: 14px;
  padding-left: 2px;
  border-left: 1px solid #999;
  overflow: hidden;
}

.ping {
  flex: 1;
  display: flex;
  align-items: center;
  gap: 3px;
  padding-left: 5px;
}

.ping svg {
  width: 8px;
  height: 7px;
}

.behind-bar {
  width: 215px;
  height: 1px;
  margin: 3px 0 0 30px;
  background: #ccc;
}

/* windows activation notice */
.watermark {
  position: absolute;
  left: 735px;
  top: 484px;
  font-family: "Open Sans", sans-serif;
}

.watermark p {
  margin: 0;
  white-space: nowrap;
}

.wm-big {
  font-size: 12px;
  line-height: 19px;
  color: rgba(255, 255, 255, 0.5);
}

.wm-small {
  font-size: 8.400px;
  line-height: 13px;
  color: rgba(170, 170, 170, 0.6);
}
```
